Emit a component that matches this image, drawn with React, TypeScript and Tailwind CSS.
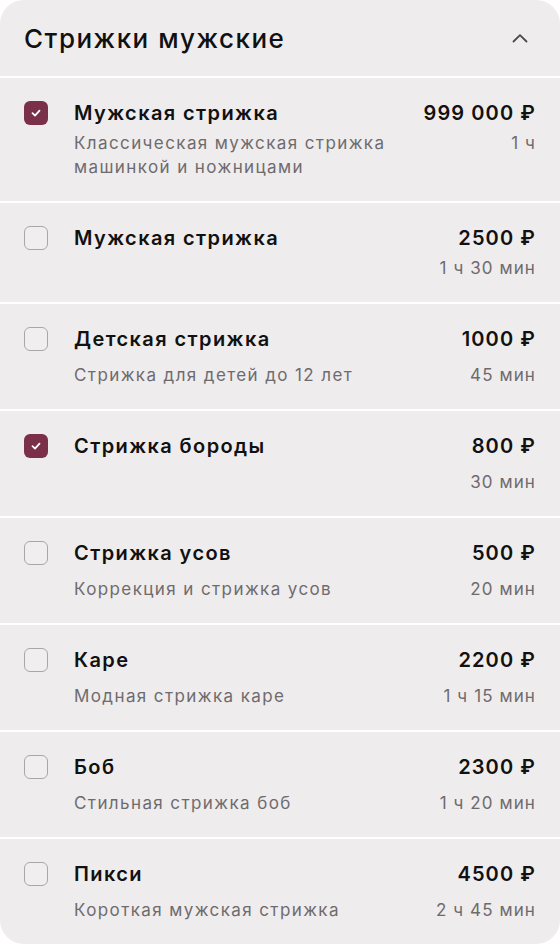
import React from "react";

type Item = {
  title: string;
  desc?: string;
  price: string;
  dur: string;
  checked: boolean;
  tight?: boolean;
};

const items: Item[] = [
  { title: "Мужская стрижка", desc: "Классическая мужская стрижка машинкой и ножницами", price: "999 000 ₽", dur: "1 ч", checked: true, tight: true },
  { title: "Мужская стрижка", price: "2500 ₽", dur: "1 ч 30 мин", checked: false, tight: true },
  { title: "Детская стрижка", desc: "Стрижка для детей до 12 лет", price: "1000 ₽", dur: "45 мин", checked: false },
  { title: "Стрижка бороды", price: "800 ₽", dur: "30 мин", checked: true },
  { title: "Стрижка усов", desc: "Коррекция и стрижка усов", price: "500 ₽", dur: "20 мин", checked: false },
  { title: "Каре", desc: "Модная стрижка каре", price: "2200 ₽", dur: "1 ч 15 мин", checked: false },
  { title: "Боб", desc: "Стильная стрижка боб", price: "2300 ₽", dur: "1 ч 20 мин", checked: false },
  { title: "Пикси", desc: "Короткая мужская стрижка", price: "4500 ₽", dur: "2 ч 45 мин", checked: false },
];

function Check({ checked }: { checked: boolean }) {
  if (checked) {
    return (
      <div className="mt-[2px] flex h-6 w-6 shrink-0 items-center justify-center rounded-[6px] bg-[#7a3049]">
        <svg width="14" height="14" viewBox="0 0 14 14" fill="none">
          <path d="M3.5 7.2 L6 9.6 L10.5 4.6" stroke="white" strokeWidth="1.8" strokeLinecap="round" strokeLinejoin="round" />
        </svg>
      </div>
    );
  }
  return <div className="mt-[2px] h-6 w-6 shrink-0 rounded-[6px] border-[1.5px] border-[#a9a6a8] bg-[#f1eeef]" />;
}

export default function App() {
  return (
    <div className="min-h-screen bg-white" style={{ fontFamily: "Inter, 'Noto Sans', sans-serif" }}>
      <div className="w-[560px] overflow-hidden rounded-[24px] bg-[#efeced]">
        <div className="flex h-[76px] items-center justify-between pl-6 pr-[31px]">
          <h1 className="text-[26px] font-medium tracking-[1.5px] text-[#111]">Стрижки мужские</h1>
          <svg width="18" height="10" viewBox="0 0 18 10" fill="none">
            <path d="M2.5 8.5 L9 2.2 L15.5 8.5" stroke="#4a4a4a" strokeWidth="1.8" strokeLinecap="round" strokeLinejoin="round" />
          </svg>
        </div>
        {items.map((it, i) => (
          <div key={i} className="border-t-2 border-white pb-[22px] pl-6 pr-6 pt-[21px]">
            <div className="flex items-start">
              <Check checked={it.checked} />
              <div className="ml-[26px] flex-1">
                <div className="text-[20px] font-semibold leading-[28px] tracking-[1.4px] text-[#111]">{it.title}</div>
                {it.desc && (
                  <div className={`${it.tight ? "mt-1" : "mt-[10px]"} w-[340px] text-[17px] leading-[24px] tracking-[1.4px] text-[#6e6b6d]`}>
                    {it.desc}
                  </div>
                )}
              </div>
              <div className="flex flex-col items-end">
                <div className="text-[20px] font-semibold leading-[28px] tracking-[1.1px] text-[#111]">{it.price}</div>
                <div className={`${it.tight ? "mt-1" : "mt-[10px]"} text-[17px] leading-[24px] tracking-[1.1px] text-[#6e6b6d]`}>
                  {it.dur}
                </div>
              </div>
            </div>
          </div>
        ))}
      </div>
    </div>
  );
}
